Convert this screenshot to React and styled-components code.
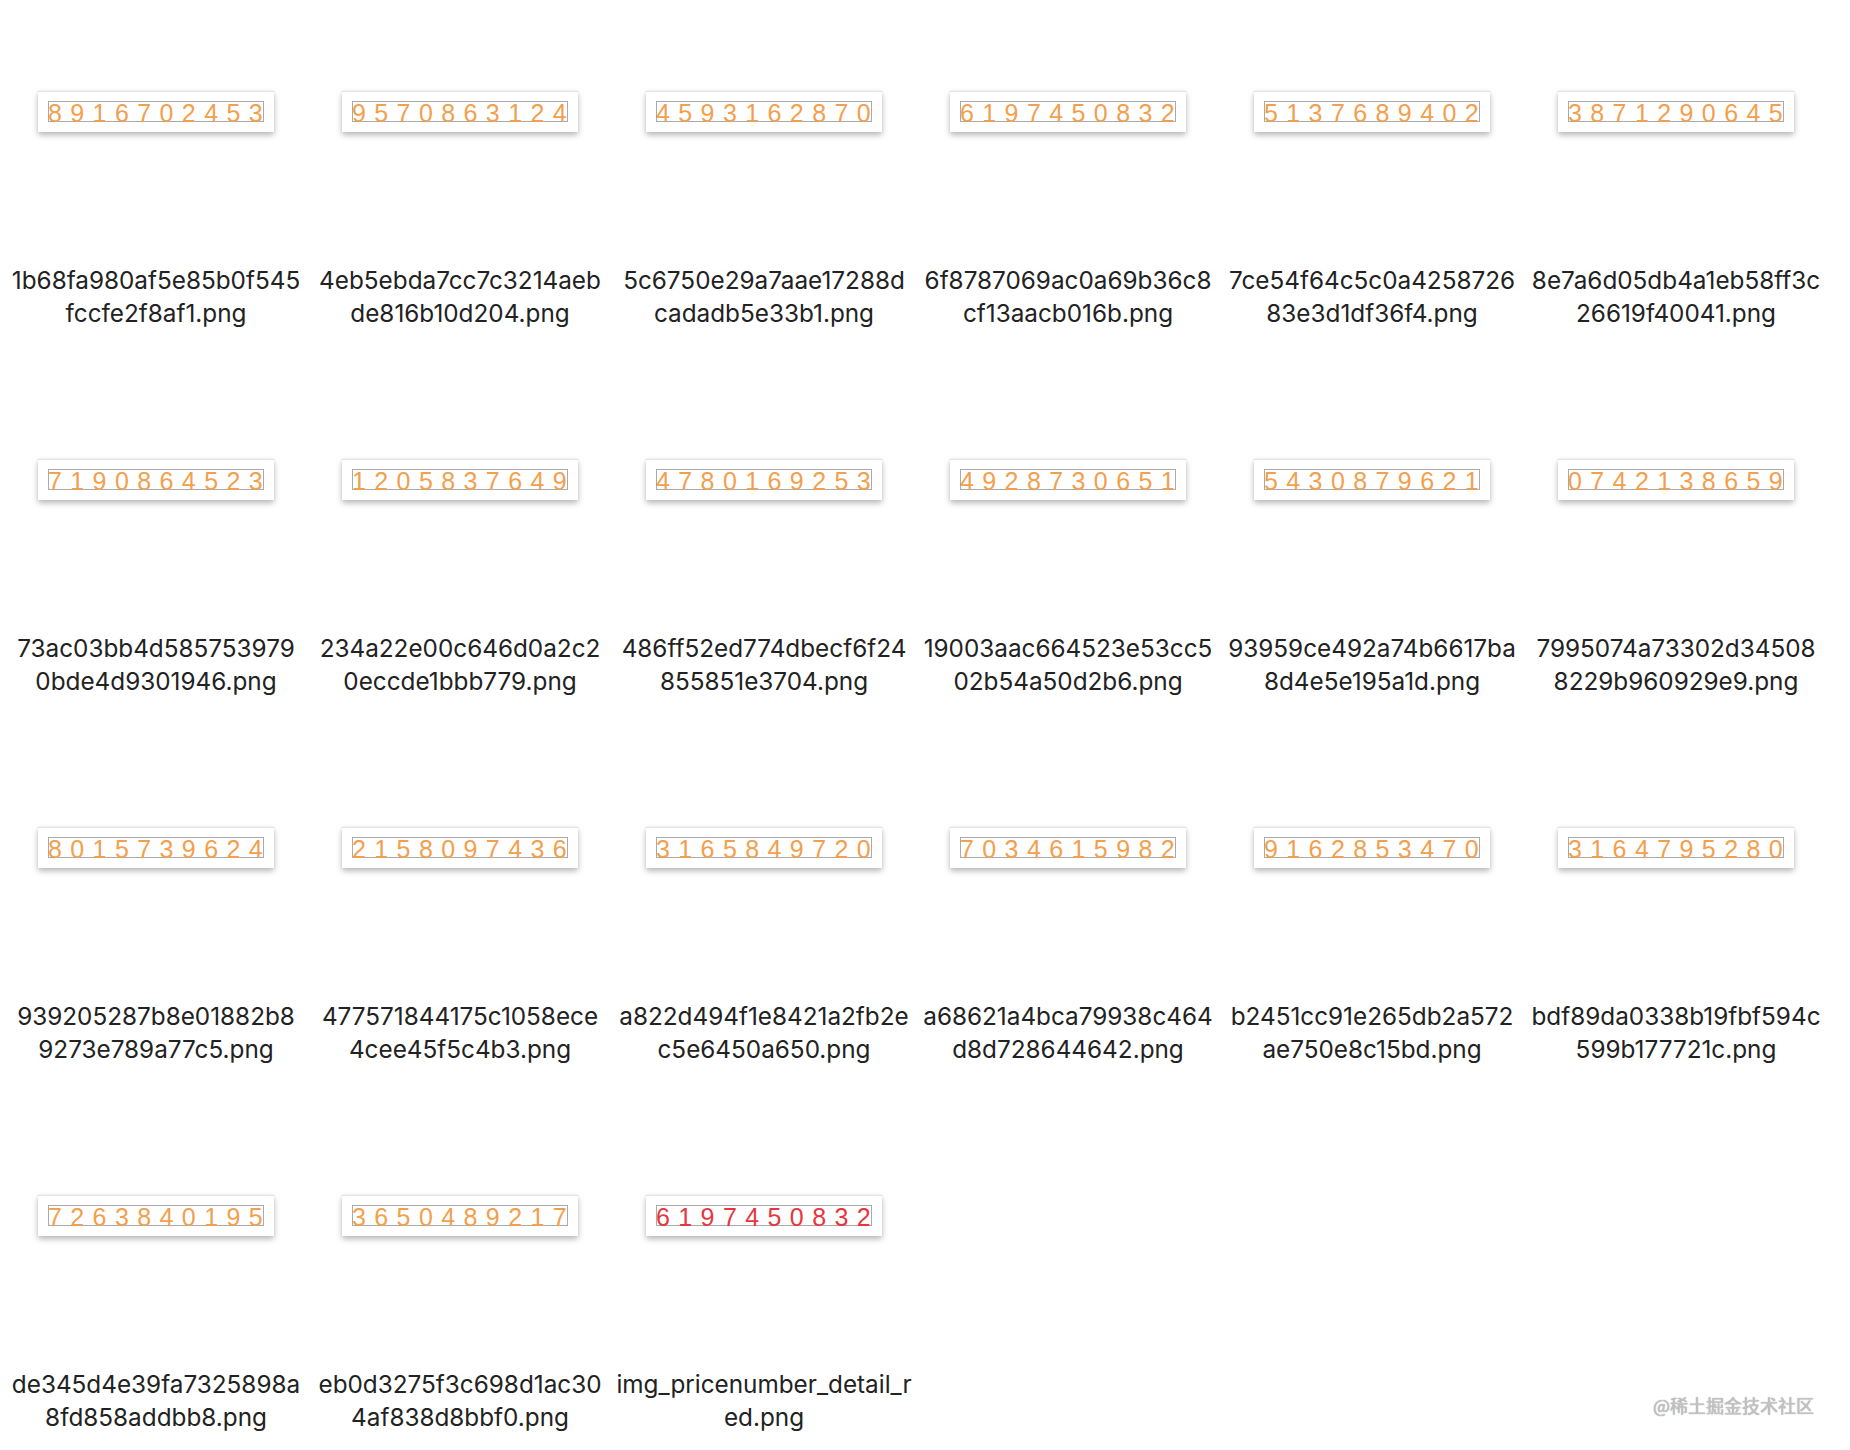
import React from 'react'
import styled, { createGlobalStyle } from 'styled-components'

const files = [
  { code: '8916702453', name: ['1b68fa980af5e85b0f545', 'fccfe2f8af1.png'] },
  { code: '9570863124', name: ['4eb5ebda7cc7c3214aeb', 'de816b10d204.png'] },
  { code: '4593162870', name: ['5c6750e29a7aae17288d', 'cadadb5e33b1.png'] },
  { code: '6197450832', name: ['6f8787069ac0a69b36c8', 'cf13aacb016b.png'] },
  { code: '5137689402', name: ['7ce54f64c5c0a4258726', '83e3d1df36f4.png'] },
  { code: '3871290645', name: ['8e7a6d05db4a1eb58ff3c', '26619f40041.png'] },
  { code: '7190864523', name: ['73ac03bb4d585753979', '0bde4d9301946.png'] },
  { code: '1205837649', name: ['234a22e00c646d0a2c2', '0eccde1bbb779.png'] },
  { code: '4780169253', name: ['486ff52ed774dbecf6f24', '855851e3704.png'] },
  { code: '4928730651', name: ['19003aac664523e53cc5', '02b54a50d2b6.png'] },
  { code: '5430879621', name: ['93959ce492a74b6617ba', '8d4e5e195a1d.png'] },
  { code: '0742138659', name: ['7995074a73302d34508', '8229b960929e9.png'] },
  { code: '8015739624', name: ['939205287b8e01882b8', '9273e789a77c5.png'] },
  { code: '2158097436', name: ['477571844175c1058ece', '4cee45f5c4b3.png'] },
  { code: '3165849720', name: ['a822d494f1e8421a2fb2e', 'c5e6450a650.png'] },
  { code: '7034615982', name: ['a68621a4bca79938c464', 'd8d728644642.png'] },
  { code: '9162853470', name: ['b2451cc91e265db2a572', 'ae750e8c15bd.png'] },
  { code: '3164795280', name: ['bdf89da0338b19fbf594c', '599b177721c.png'] },
  { code: '7263840195', name: ['de345d4e39fa7325898a', '8fd858addbb8.png'] },
  { code: '3650489217', name: ['eb0d3275f3c698d1ac30', '4af838d8bbf0.png'] },
  { code: '6197450832', name: ['img_pricenumber_detail_r', 'ed.png'], red: true },
]

const GlobalStyle = createGlobalStyle`
  html, body {
    margin: 0;
    padding: 0;
    background: #fff;
  }
  body {
    font-family: Inter, "Noto Sans", sans-serif;
  }
`

const Page = styled.div`
  position: relative;
  width: 1850px;
  height: 1450px;
  overflow: hidden;
`

const Grid = styled.div`
  display: grid;
  grid-template-columns: repeat(6, 304px);
  row-gap: 131px;
  padding: 91px 0 0 4px;
`

const Cell = styled.div`
  display: flex;
  flex-direction: column;
  align-items: center;
  height: 237px;
`

const Thumb = styled.div`
  box-sizing: border-box;
  width: 236px;
  height: 41px;
  padding: 10px;
  background: #fff;
  border-top: 1px solid #e4e4e4;
  box-shadow: 0 3px 6px rgba(0, 0, 0, 0.28), 0 0 1px rgba(0, 0, 0, 0.12);
`

const Digits = styled.div`
  box-sizing: border-box;
  width: 216px;
  height: 21px;
  margin-top: -1px;
  border: 1px solid #aaa;
  font-family: "Liberation Sans", Arial, sans-serif;
  font-size: 25px;
  line-height: 21px;
  letter-spacing: 8.4px;
  white-space: nowrap;
  overflow: visible;
  color: ${(p) => (p.red ? '#e8363e' : '#f2a04e')};
  text-indent: -1px;
  padding-top: 1px;
`

const Label = styled.div`
  margin-top: 132px;
  font-family: Inter, "Noto Sans", sans-serif;
  font-size: 24.3px;
  line-height: 33px;
  color: #222;
  text-align: center;
  white-space: nowrap;
`

const Watermark = styled.div`
  position: absolute;
  left: 1653px;
  top: 1394px;
  font-family: "Noto Sans CJK SC", sans-serif;
  font-size: 18px;
  line-height: 22px;
  color: #c4c4c4;
  text-shadow: 0 0 1px #888;
`

const App = () => {
  return (
    <Page>
      <GlobalStyle />
      <Grid>
        {files.map((f, i) => (
          <Cell key={i}>
            <Thumb>
              <Digits red={f.red}>{f.code}</Digits>
            </Thumb>
            <Label>
              {f.name[0]}
              <br />
              {f.name[1]}
            </Label>
          </Cell>
        ))}
      </Grid>
      <Watermark>@稀土掘金技术社区</Watermark>
    </Page>
  )
}

export default App
